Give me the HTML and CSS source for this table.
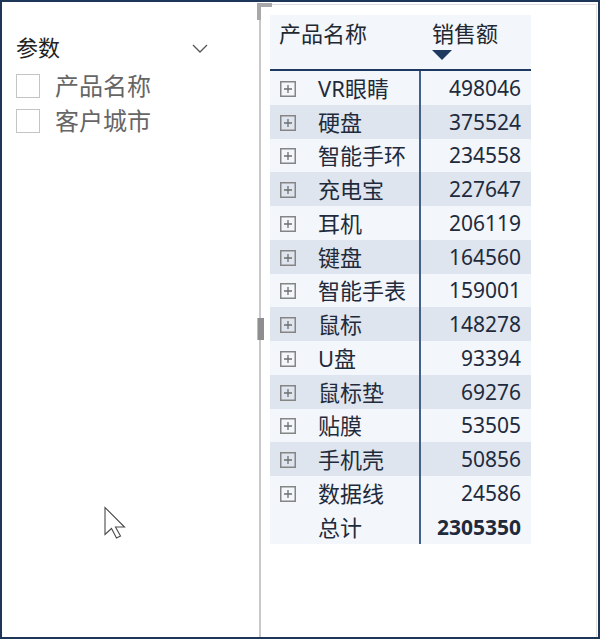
FILE: index.html
```html
<!DOCTYPE html>
<html lang="zh">
<head>
<meta charset="utf-8">
<link rel="stylesheet" href="styles.css">
</head>
<body>
<div class="frame">
  <div class="slicer">
    <div class="slicer-head">
      <span class="slicer-title">参数</span>
      <svg class="chev" width="16" height="9" viewBox="0 0 16 9"><path d="M1 1 L8 8 L15 1" fill="none" stroke="#555" stroke-width="1.3"/></svg>
    </div>
    <div class="opt"><span class="box"></span><span class="opt-label">产品名称</span></div>
    <div class="opt"><span class="box"></span><span class="opt-label">客户城市</span></div>
  </div>
  <div class="visual">
    <div class="handle-corner"></div>
    <div class="handle-mid"></div>
    <div class="table">
      <div class="thead">
        <div class="th th-name">产品名称</div>
        <div class="th th-val">销售额<span class="sort"></span></div>
      </div>
      <div class="tbody">
        <div class="row"><div class="c1"><svg class="exp" width="16" height="16" viewBox="0 0 16 16"><rect x="0.75" y="0.75" width="14.5" height="14.5" fill="none" stroke="#858585" stroke-width="1.5"/><path d="M4 8 H12 M8 4 V12" stroke="#6e6e6e" stroke-width="1.3"/></svg><span class="nm">VR眼睛</span></div><div class="c2">498046</div></div>
        <div class="row alt"><div class="c1"><svg class="exp" width="16" height="16" viewBox="0 0 16 16"><rect x="0.75" y="0.75" width="14.5" height="14.5" fill="none" stroke="#858585" stroke-width="1.5"/><path d="M4 8 H12 M8 4 V12" stroke="#6e6e6e" stroke-width="1.3"/></svg><span class="nm">硬盘</span></div><div class="c2">375524</div></div>
        <div class="row"><div class="c1"><svg class="exp" width="16" height="16" viewBox="0 0 16 16"><rect x="0.75" y="0.75" width="14.5" height="14.5" fill="none" stroke="#858585" stroke-width="1.5"/><path d="M4 8 H12 M8 4 V12" stroke="#6e6e6e" stroke-width="1.3"/></svg><span class="nm">智能手环</span></div><div class="c2">234558</div></div>
        <div class="row alt"><div class="c1"><svg class="exp" width="16" height="16" viewBox="0 0 16 16"><rect x="0.75" y="0.75" width="14.5" height="14.5" fill="none" stroke="#858585" stroke-width="1.5"/><path d="M4 8 H12 M8 4 V12" stroke="#6e6e6e" stroke-width="1.3"/></svg><span class="nm">充电宝</span></div><div class="c2">227647</div></div>
        <div class="row"><div class="c1"><svg class="exp" width="16" height="16" viewBox="0 0 16 16"><rect x="0.75" y="0.75" width="14.5" height="14.5" fill="none" stroke="#858585" stroke-width="1.5"/><path d="M4 8 H12 M8 4 V12" stroke="#6e6e6e" stroke-width="1.3"/></svg><span class="nm">耳机</span></div><div class="c2">206119</div></div>
        <div class="row alt"><div class="c1"><svg class="exp" width="16" height="16" viewBox="0 0 16 16"><rect x="0.75" y="0.75" width="14.5" height="14.5" fill="none" stroke="#858585" stroke-width="1.5"/><path d="M4 8 H12 M8 4 V12" stroke="#6e6e6e" stroke-width="1.3"/></svg><span class="nm">键盘</span></div><div class="c2">164560</div></div>
        <div class="row"><div class="c1"><svg class="exp" width="16" height="16" viewBox="0 0 16 16"><rect x="0.75" y="0.75" width="14.5" height="14.5" fill="none" stroke="#858585" stroke-width="1.5"/><path d="M4 8 H12 M8 4 V12" stroke="#6e6e6e" stroke-width="1.3"/></svg><span class="nm">智能手表</span></div><div class="c2">159001</div></div>
        <div class="row alt"><div class="c1"><svg class="exp" width="16" height="16" viewBox="0 0 16 16"><rect x="0.75" y="0.75" width="14.5" height="14.5" fill="none" stroke="#858585" stroke-width="1.5"/><path d="M4 8 H12 M8 4 V12" stroke="#6e6e6e" stroke-width="1.3"/></svg><span class="nm">鼠标</span></div><div class="c2">148278</div></div>
        <div class="row"><div class="c1"><svg class="exp" width="16" height="16" viewBox="0 0 16 16"><rect x="0.75" y="0.75" width="14.5" height="14.5" fill="none" stroke="#858585" stroke-width="1.5"/><path d="M4 8 H12 M8 4 V12" stroke="#6e6e6e" stroke-width="1.3"/></svg><span class="nm">U盘</span></div><div class="c2">93394</div></div>
        <div class="row alt"><div class="c1"><svg class="exp" width="16" height="16" viewBox="0 0 16 16"><rect x="0.75" y="0.75" width="14.5" height="14.5" fill="none" stroke="#858585" stroke-width="1.5"/><path d="M4 8 H12 M8 4 V12" stroke="#6e6e6e" stroke-width="1.3"/></svg><span class="nm">鼠标垫</span></div><div class="c2">69276</div></div>
        <div class="row"><div class="c1"><svg class="exp" width="16" height="16" viewBox="0 0 16 16"><rect x="0.75" y="0.75" width="14.5" height="14.5" fill="none" stroke="#858585" stroke-width="1.5"/><path d="M4 8 H12 M8 4 V12" stroke="#6e6e6e" stroke-width="1.3"/></svg><span class="nm">贴膜</span></div><div class="c2">53505</div></div>
        <div class="row alt"><div class="c1"><svg class="exp" width="16" height="16" viewBox="0 0 16 16"><rect x="0.75" y="0.75" width="14.5" height="14.5" fill="none" stroke="#858585" stroke-width="1.5"/><path d="M4 8 H12 M8 4 V12" stroke="#6e6e6e" stroke-width="1.3"/></svg><span class="nm">手机壳</span></div><div class="c2">50856</div></div>
        <div class="row"><div class="c1"><svg class="exp" width="16" height="16" viewBox="0 0 16 16"><rect x="0.75" y="0.75" width="14.5" height="14.5" fill="none" stroke="#858585" stroke-width="1.5"/><path d="M4 8 H12 M8 4 V12" stroke="#6e6e6e" stroke-width="1.3"/></svg><span class="nm">数据线</span></div><div class="c2">24586</div></div>
        <div class="row total"><div class="c1"><span class="exp-space"></span><span class="nm">总计</span></div><div class="c2">2305350</div></div>
      </div>
    </div>
  </div>
  <svg class="cursor" width="24" height="34" viewBox="0 0 24 34"><path d="M2 1.5 L2 28.5 L8.5 22.5 L13.5 32 L17.5 30 L12.5 21 L21.5 21 Z" fill="#fff" stroke="#4a4a4a" stroke-width="1.1" stroke-linejoin="miter"/></svg>
</div>
</body>
</html>
```
FILE: styles.css
```css
html, body {
  margin: 0;
  padding: 0;
  background: #fff;
}
body {
  font-family: "Noto Sans", "Noto Sans CJK SC", sans-serif;
}
.frame {
  position: relative;
  width: 600px;
  height: 639px;
  box-sizing: border-box;
  border: 2px solid #1d3557;
  display: flex;
  background: #fff;
  overflow: hidden;
}
.slicer {
  width: 257px;
  flex: none;
  box-sizing: border-box;
  padding: 30px 51px 0 14px;
}
.slicer-head {
  display: flex;
  justify-content: space-between;
  align-items: center;
  height: 30px;
  margin-bottom: 6px;
}
.slicer-title {
  font-size: 22px;
  line-height: 30px;
  color: #222;
}
.chev {
  margin-top: 2px;
}
.opt {
  display: flex;
  align-items: center;
  height: 35px;
  gap: 15px;
}
.box {
  width: 24px;
  height: 24px;
  box-sizing: border-box;
  border: 1.5px solid #c4c4c4;
  background: #fff;
}
.opt-label {
  font-size: 24px;
  line-height: 30px;
  color: #666;
}
.visual {
  flex: 1;
  position: relative;
  margin: 2px 1px 0 0;
  border-top: 1px solid #dcdcdc;
  border-left: 2px solid #c8c8c8;
  border-right: 1px solid #e2e2e2;
  padding: 10px 0 0 9px;
}
.handle-corner {
  position: absolute;
  left: -4px;
  top: -2px;
  width: 11px;
  height: 13px;
  border-top: 4px solid #a8a8a8;
  border-left: 4px solid #a8a8a8;
}
.handle-mid {
  position: absolute;
  left: -4px;
  top: 313px;
  width: 6px;
  height: 22px;
  background: #8e8e8e;
  border-left: 1px solid #bdbdbd;
}
.table {
  width: 261px;
  background: #f3f6fa;
  color: #1f2b3c;
}
.thead {
  display: grid;
  grid-template-columns: 149px 112px;
  height: 54px;
  border-bottom: 2px solid #1f3a60;
}
.th {
  font-size: 22px;
  line-height: 28px;
  padding-top: 4px;
  color: #222831;
}
.th-name {
  padding-left: 9px;
}
.th-val {
  padding-left: 13px;
  display: flex;
  flex-direction: column;
  align-items: flex-start;
}
.sort {
  margin-top: 3px;
  width: 0;
  height: 0;
  border-left: 10.5px solid transparent;
  border-right: 10.5px solid transparent;
  border-top: 10px solid #1f3a60;
}
.row {
  display: grid;
  grid-template-columns: 151px 110px;
  height: 33.75px;
}
.row.alt {
  background: #dee5ee;
}
.c1 {
  display: flex;
  align-items: center;
  gap: 22px;
  padding-left: 10px;
  border-right: 2px solid #41608a;
}
.exp, .exp-space {
  flex: none;
  width: 16px;
  height: 16px;
  margin-top: 2px;
}
.nm {
  font-size: 22px;
  line-height: 26px;
  white-space: nowrap;
}
.c2 {
  display: flex;
  align-items: center;
  justify-content: flex-end;
  padding-right: 10px;
  font-size: 21px;
  line-height: 26px;
}
.total .c2 {
  font-weight: 700;
}
.cursor {
  position: absolute;
  left: 101px;
  top: 504px;
}
```
